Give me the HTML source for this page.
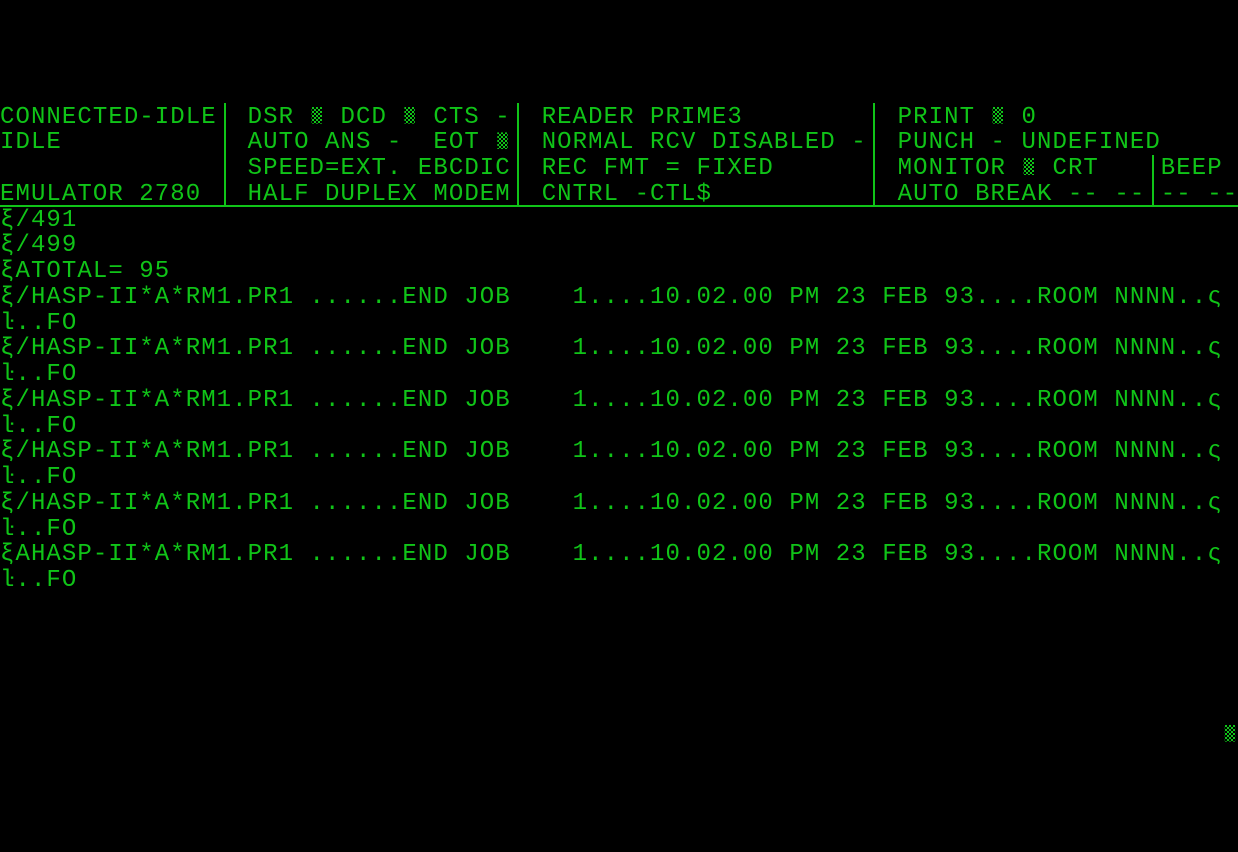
<!DOCTYPE html>
<html><head><meta charset="utf-8"><style>
html,body{margin:0;padding:0;background:#000;width:1238px;height:852px;overflow:hidden}
pre{position:absolute;left:0;top:104.6px;margin:0;font-family:"Liberation Mono","DejaVu Sans Mono",monospace;font-size:24px;letter-spacing:1.075px;line-height:25.75px;color:#10c418;white-space:pre}
.s{display:inline-block;width:15.475px;height:17px;vertical-align:-1px;background:repeating-conic-gradient(#10c418 0 25%,#000 0 50%) 0 0/4px 4px;clip-path:inset(0 3px 0 2px)}
.v{position:absolute;background:#10c418;width:2px}
.h{position:absolute;background:#10c418;height:2px;left:0;width:1238px;top:205px}
</style></head><body>
<div class="v" style="left:224px;top:103px;height:104px"></div>
<div class="v" style="left:517px;top:103px;height:104px"></div>
<div class="v" style="left:873px;top:103px;height:104px"></div>
<div class="v" style="left:1152px;top:155px;height:52px"></div>
<div class="h"></div>
<pre>CONNECTED-IDLE  DSR <span class="s"></span> DCD <span class="s"></span> CTS -  READER PRIME3          PRINT <span class="s"></span> 0
IDLE            AUTO ANS -  EOT <span class="s"></span>  NORMAL RCV DISABLED -  PUNCH - UNDEFINED
                SPEED=EXT. EBCDIC  REC FMT = FIXED        MONITOR <span class="s"></span> CRT    BEEP
EMULATOR 2780   HALF DUPLEX MODEM  CNTRL -CTL$            AUTO BREAK -- -- -- --
ξ/491
ξ/499
ξATOTAL= 95
ξ/HASP-II*A*RM1.PR1 ......END JOB    1....10.02.00 PM 23 FEB 93....ROOM NNNN..ς
ŀ..FO
ξ/HASP-II*A*RM1.PR1 ......END JOB    1....10.02.00 PM 23 FEB 93....ROOM NNNN..ς
ŀ..FO
ξ/HASP-II*A*RM1.PR1 ......END JOB    1....10.02.00 PM 23 FEB 93....ROOM NNNN..ς
ŀ..FO
ξ/HASP-II*A*RM1.PR1 ......END JOB    1....10.02.00 PM 23 FEB 93....ROOM NNNN..ς
ŀ..FO
ξ/HASP-II*A*RM1.PR1 ......END JOB    1....10.02.00 PM 23 FEB 93....ROOM NNNN..ς
ŀ..FO
ξAHASP-II*A*RM1.PR1 ......END JOB    1....10.02.00 PM 23 FEB 93....ROOM NNNN..ς
ŀ..FO





                                                                               <span class="s"></span></pre>
</body></html>
